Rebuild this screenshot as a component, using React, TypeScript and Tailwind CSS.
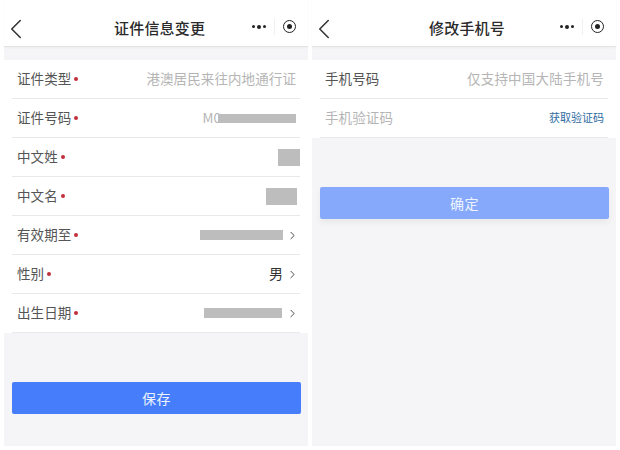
import type { ReactNode } from "react";
import { ChevronLeft, ChevronRight } from "lucide-react";

const cjk = "font-['Noto_Sans_CJK_SC','Noto_Sans',sans-serif]";

function Header({ title, titleClass }: { title: string; titleClass: string }) {
  return (
    <div className="relative flex h-[47px] shrink-0 items-center border-b border-[#e4e4e4] bg-white shadow-[0_1px_2px_rgba(0,0,0,0.04)]">
      <ChevronLeft className="ml-[-5px] mt-[11px] h-[34px] w-[34px] shrink-0 text-[#333]" strokeWidth={1.1} />
      <span className={`absolute top-[16px] text-[15px] font-medium leading-[24px] tracking-[0.2px] text-[#2a2a2a] ${titleClass}`}>{title}</span>
      <div className="ml-auto mr-[12px] mt-[7px] flex items-center">
        <div className="flex items-center gap-[2px]">
          <span className="h-[3px] w-[3px] rounded-full bg-[#222]" />
          <span className="h-[4px] w-[4px] rounded-full bg-[#222]" />
          <span className="h-[3px] w-[3px] rounded-full bg-[#222]" />
        </div>
        <span className="mx-[8px] h-[16px] w-px bg-[#f0f0f0]" />
        <div className="flex h-[13px] w-[13px] items-center justify-center rounded-full border-[1.5px] border-[#222]">
          <span className="h-[5px] w-[5px] rounded-full bg-[#222]" />
        </div>
      </div>
    </div>
  );
}

function Row({
  label,
  required,
  labelClass = "text-[#555]",
  children,
}: {
  label: string;
  required?: boolean;
  labelClass?: string;
  children: ReactNode;
}) {
  return (
    <div className="flex h-[39px] items-center border-b border-[#e8e8e8] pl-[5px] pr-[4px]">
      <span className={`mt-[-2px] text-[13.5px] tracking-[0.1px] ${labelClass}`}>{label}</span>
      {required && <span className="ml-[3px] h-[4px] w-[4px] rounded-full bg-[#c0313c]" />}
      <div className="ml-auto flex items-center">{children}</div>
    </div>
  );
}

function Arrow() {
  return <ChevronRight className="ml-[3px] mr-[-3px] h-[13px] w-[13px] shrink-0 text-[#444]" strokeWidth={1.75} />;
}

function Masked({ className }: { className: string }) {
  return <span className={`block bg-[#bdbdbd] ${className}`} />;
}

export default function App() {
  return (
    <div className={`flex h-[450px] w-[620px] gap-[4px] bg-white px-[4px] pb-[4px] ${cjk}`}>
      <section className="flex w-[304px] flex-col bg-[#f5f5f7]">
        <Header title="证件信息变更" titleClass="left-[110px]" />
        <div className="mt-[13px] bg-white px-[8px]">
          <Row label="证件类型" required>
            <span className="mt-[-1px] text-[13.5px] tracking-[0.1px] text-[#b5b5b5]">港澳居民来往内地通行证</span>
          </Row>
          <Row label="证件号码" required>
            <span className="mt-[-1px] text-[13.5px] text-[#b5b5b5]">M0</span>
            <Masked className="ml-[-3px] h-[9px] w-[78px]" />
          </Row>
          <Row label="中文姓" required>
            <Masked className="mr-[-4px] h-[17px] w-[22px]" />
          </Row>
          <Row label="中文名" required>
            <Masked className="mr-[-1px] h-[17px] w-[31px]" />
          </Row>
          <Row label="有效期至" required>
            <Masked className="h-[10px] w-[83px]" />
            <Arrow />
          </Row>
          <Row label="性别" required>
            <span className="mt-[-2px] text-[14px] text-[#333]">男</span>
            <Arrow />
          </Row>
          <Row label="出生日期" required>
            <Masked className="mr-[1px] h-[10px] w-[78px]" />
            <Arrow />
          </Row>
        </div>
        <button
          type="button"
          className="ml-[8px] mr-[7px] mt-[49px] h-[32px] rounded-[2px] bg-[#457dfb] text-[14px] tracking-[0.4px] text-[#eef4ff]"
        >
          保存
        </button>
      </section>

      <section className="flex w-[304px] flex-col bg-[#f5f5f7]">
        <Header title="修改手机号" titleClass="left-[117px]" />
        <div className="mt-[13px] bg-white px-[8px]">
          <Row label="手机号码">
            <span className="mt-[-1px] text-[13.5px] tracking-[0.2px] text-[#b5b5b5]">仅支持中国大陆手机号</span>
          </Row>
          <Row label="手机验证码" labelClass="text-[#b5b5b5]">
            <span className="mt-[-2px] text-[11px] text-[#2f6c9f]">获取验证码</span>
          </Row>
        </div>
        <button
          type="button"
          className="ml-[8px] mr-[7px] mt-[49px] h-[32px] rounded-[2px] bg-[#86a9fb] text-[14px] tracking-[0.4px] text-[#eef4ff] shadow-[0_4px_6px_rgba(0,0,0,0.05)]"
        >
          确定
        </button>
      </section>
    </div>
  );
}
